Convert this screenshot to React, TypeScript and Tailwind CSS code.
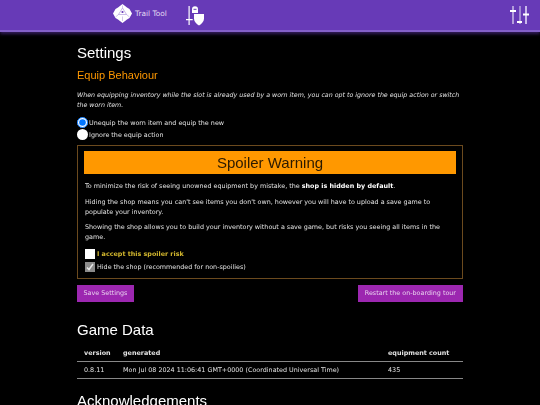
import React from "react";

const SwordShieldIcon = () => (
  <svg width="19" height="21" viewBox="0 0 19 21" fill="white">
    <path d="M2.500 1h1.200v13h3v1.300h-3V20H2.500v-4.700H0V14h2.500z" />
    <path d="M6 4.200a3 3 0 0 1 6 0V8H6z" />
    <rect x="7.500" y="3.800" width="3" height="1" fill="#673ab7" />
    <path d="M8 9h10v4.500c0 3-2.400 5.500-5 7-2.600-1.500-5-4-5-7z" />
  </svg>
);

const DiceIcon = () => (
  <svg width="19" height="19" viewBox="0 0 19 19">
    <path d="M9.500 0L14 3.500L16.500 5L19 9.500L16.500 14L14 15.500L9.500 19L5 15.500L2.500 14L0 9.500L2.500 5L5 3.500Z" fill="white" />
    <path d="M9.500 4L13.500 10.500H5.500Z" fill="none" stroke="#a48bd6" strokeWidth="0.6" />
    <path d="M9.500 4V1.500M13.500 10.500L16.500 13M5.500 10.500L2.500 13M9.500 12.500V17" stroke="#a48bd6" strokeWidth="0.5" />
    <circle cx="9.500" cy="8" r="1.100" fill="#673ab7" />
  </svg>
);

const SlidersIcon = () => (
  <svg width="19" height="18" viewBox="0 0 19 18" fill="white">
    <rect x="2.500" y="0" width="1" height="18" />
    <rect x="0" y="4" width="6" height="2" />
    <rect x="9.500" y="0" width="1" height="18" opacity="0.8" />
    <rect x="7" y="15" width="5" height="2" />
    <rect x="15" y="0" width="2" height="18" fill="#c9b6ea" />
    <rect x="13" y="7.500" width="6" height="2" />
  </svg>
);

const App = () => {
  return (
    <div className="h-[405px] w-[540px] overflow-hidden bg-black font-['DejaVu_Sans',sans-serif] text-[6.400px] text-[#e2e2e2]">
      <nav className="flex h-[32px] items-start justify-between border-b-2 border-[#8461c9] bg-[#673ab7] pr-[11px] pl-[113px] shadow-[0_2px_3px_rgba(103,58,183,0.5)]">
        <div className="flex items-start">
          <div className="pt-[4px]">
            <DiceIcon />
          </div>
          <span className="mt-[9px] ml-[3px] text-[7.400px] leading-[9px] text-[#e4dcf3]">Trail Tool</span>
          <div className="mt-[5px] ml-[19px]">
            <SwordShieldIcon />
          </div>
        </div>
        <div className="pt-[6px]">
          <SlidersIcon />
        </div>
      </nav>

      <main className="mx-[77px] w-[386px] [will-change:transform]">
        <h1 className="mt-[12px] font-['Liberation_Sans',sans-serif] text-[15px] leading-[18px] text-white">Settings</h1>
        <h2 className="mt-[6px] font-['Liberation_Sans',sans-serif] text-[11px] leading-[14px] text-[#ff9800]">Equip Behaviour</h2>
        <p className="mt-[8px] text-[6.300px] leading-[10px] italic">
          When equipping inventory while the slot is already used by a worn item, you can opt to ignore the equip action or switch the worn item.
        </p>

        <div className="mt-[6px] flex flex-col">
          <label className="flex h-[12px] items-center gap-[1px]">
            <input type="radio" name="equip" defaultChecked className="m-0 size-[11px]" />
            <span className="pt-[3px]">Unequip the worn item and equip the new</span>
          </label>
          <label className="flex h-[12px] items-center gap-[1px]">
            <input type="radio" name="equip" className="m-0 size-[11px] appearance-none rounded-full bg-white" />
            <span className="pt-[3px]">Ignore the equip action</span>
          </label>
        </div>

        <section className="mt-[5px] border border-[#6b4a1e] px-[6px] pt-[5px] pb-[5px]">
          <div className="bg-[#ff9800] text-center font-['Liberation_Sans',sans-serif] text-[15px] leading-[23px] text-[#2b1a00]">
            Spoiler Warning
          </div>
          <p className="mt-[7px] px-[1px] leading-[10px]">
            To minimize the risk of seeing unowned equipment by mistake, the <b className="text-white">shop is hidden by default</b>.
          </p>
          <p className="mt-[6px] px-[1px] leading-[10px]">
            Hiding the shop means you can't see items you don't own, however you will have to upload a save game to populate your inventory.
          </p>
          <p className="mt-[5px] px-[1px] leading-[10px]">
            Showing the shop allows you to build your inventory without a save game, but risks you seeing all items in the game.
          </p>
          <label className="mt-[5px] flex h-[13px] items-center gap-[2px] pl-[1px]">
            <input type="checkbox" className="m-0 size-[10px] appearance-none bg-white" />
            <b className="pt-[2px] text-[#d4b82e]">I accept this spoiler risk</b>
          </label>
          <label className="flex h-[13px] items-center gap-[2px] pl-[1px]">
            <span className="flex size-[10px] items-center justify-center bg-[#8a8a8a]">
              <svg width="8" height="8" viewBox="0 0 8 8" fill="none" stroke="#e6e6e6" strokeWidth="1.500">
                <path d="M1 4.500L3 6.500L7 1" />
              </svg>
            </span>
            <span className="pt-[2px]">Hide the shop (recommended for non-spoilies)</span>
          </label>
        </section>

        <div className="mt-[6px] flex justify-between">
          <button className="h-[17px] bg-[#9c27b0] px-[6.500px] text-[#e8d0ee]">Save Settings</button>
          <button className="h-[17px] bg-[#9c27b0] px-[7px] text-[#e8d0ee]">Restart the on-boarding tour</button>
        </div>

        <h1 className="mt-[19px] font-['Liberation_Sans',sans-serif] text-[15px] leading-[18px] text-white">Game Data</h1>
        <table className="mt-[7px] w-full border-collapse text-left">
          <thead>
            <tr className="h-[15px] border-b border-[#888888]">
              <th className="w-[39px] pt-[2px] pl-[7px] font-bold">version</th>
              <th className="w-[265px] pt-[2px] pl-[7px] font-bold">generated</th>
              <th className="pt-[2px] pl-[7px] font-bold">equipment count</th>
            </tr>
          </thead>
          <tbody>
            <tr className="h-[17px] border-b border-[#888888]">
              <td className="pt-[2px] pl-[7px]">0.8.11</td>
              <td className="pt-[2px] pl-[7px]">Mon Jul 08 2024 11:06:41 GMT+0000 (Coordinated Universal Time)</td>
              <td className="pt-[2px] pl-[7px]">435</td>
            </tr>
          </tbody>
        </table>

        <h1 className="mt-[13px] font-['Liberation_Sans',sans-serif] text-[15px] leading-[18px] text-white">Acknowledgements</h1>
      </main>
    </div>
  );
};

export default App;
